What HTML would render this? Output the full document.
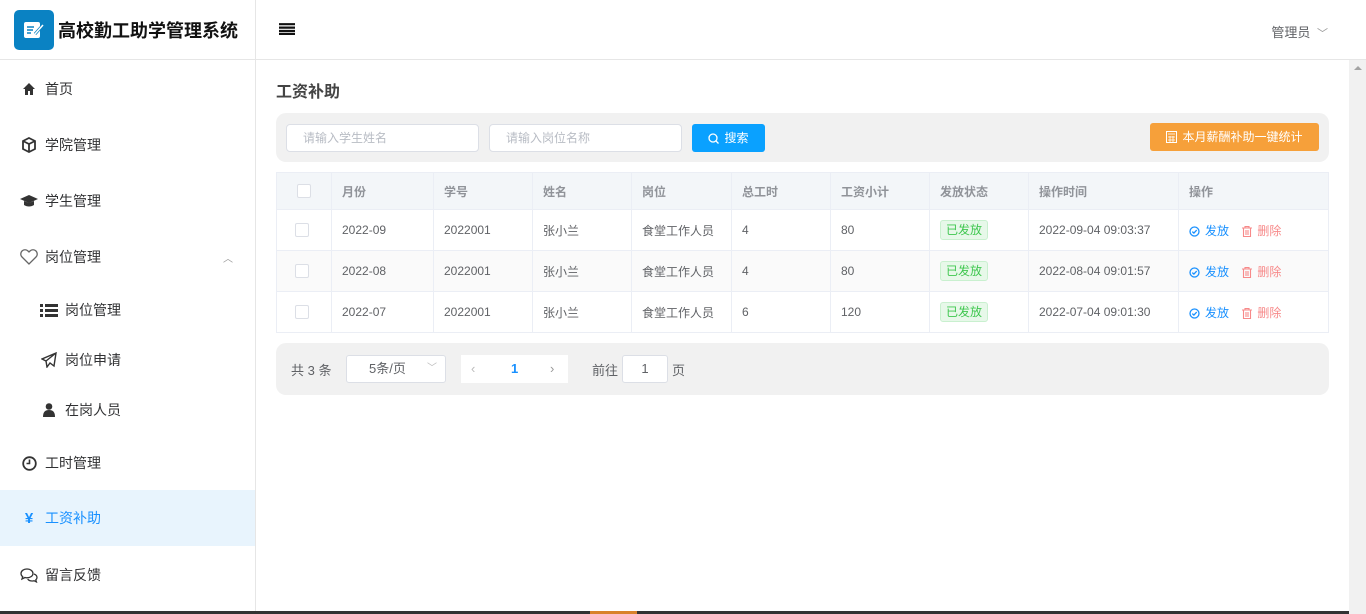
<!DOCTYPE html>
<html><head><meta charset="utf-8"><style>
*{margin:0;padding:0;box-sizing:border-box}
body{width:1366px;height:614px;overflow:hidden;font-family:"Liberation Sans","Noto Sans CJK SC",sans-serif;background:#fff;position:relative;color:#333}
.side{position:absolute;left:0;top:0;width:256px;height:614px;border-right:1px solid #e6e6e6}
.logo{height:60px;border-bottom:1px solid #e6e6e6;display:flex;align-items:center;padding-left:14px}
.logo .ic{width:40px;height:40px;background:#0a82c3;border-radius:5px;margin-right:4px;display:flex;align-items:center;justify-content:center}
.logo span{font-size:18px;font-weight:bold;color:#111}
.mi{position:absolute;left:0;width:255px;height:56px;display:flex;align-items:center;padding-left:20px;font-size:14px;color:#303133}
.mi i{width:18px;margin-right:7px;display:inline-flex;justify-content:center;font-style:normal}
.sub{padding-left:40px;height:50px}
.act{background:#e8f4fd;color:#1890ff}
.top{position:absolute;left:256px;top:0;right:0;height:60px;border-bottom:1px solid #e6e6e6}
.scroll{position:absolute;right:0;top:60px;width:17px;height:554px;background:#f1f1f1}
.title{position:absolute;left:276px;top:78px;font-size:16px;font-weight:bold;color:#444}
.bar{position:absolute;left:276px;top:113px;width:1053px;height:49px;background:#f1f1f1;border-radius:10px}
.inp{position:absolute;height:28px;background:#fff;border:1px solid #dcdfe6;border-radius:4px;font-size:12px;color:#b8bcc4;padding-left:16px;line-height:26px}
table{position:absolute;left:276px;top:172px;width:1053px;border-collapse:collapse;font-size:12px;color:#606266}
td,th{border:1px solid #ebeef5;text-align:left;padding-left:10px;height:41px}
th{background:#f3f6f9;height:37px;color:#909399;font-weight:bold}
.cb{display:inline-block;width:14px;height:14px;border:1px solid #dcdfe6;border-radius:2px;background:#fff;margin-left:8px;vertical-align:middle}
.tag{display:inline-block;background:#e7f8e9;border:1px solid #c9f0cf;color:#3fc74f;border-radius:3px;padding:0 5px;line-height:18px}
.blue{color:#1890ff}.red{color:#f78989}
svg.s{vertical-align:-2px;margin-right:5px}
.pg{position:absolute;left:276px;top:343px;width:1053px;height:52px;background:#f1f1f1;border-radius:10px;font-size:13px;color:#606266}
</style></head><body>
<div class="side">
<div class="logo"><div class="ic"><svg width="24" height="22" viewBox="0 0 24 22"><rect x="2" y="3" width="16" height="16" rx="2" fill="#fff"/><path d="M5 8h7M5 11h6M5 14h4" stroke="#0a82c3" stroke-width="1.6"/><path d="M13 15l8-9" stroke="#0a82c3" stroke-width="3"/><path d="M13 15l8-9" stroke="#fff" stroke-width="1.5"/></svg></div><span>高校勤工助学管理系统</span></div>
<div class="mi" style="top:61px"><i><svg width="14" height="14" viewBox="0 0 14 14"><path d="M7 1L1 7h2v6h3v-4h2v4h3V7h2z" fill="#333"/></svg></i>首页</div>
<div class="mi" style="top:117px"><i><svg width="16" height="16" viewBox="0 0 16 16"><path d="M8 1l6 3v8l-6 3-6-3V4z M2 4l6 3 6-3 M8 7v8" fill="none" stroke="#333" stroke-width="1.8"/></svg></i>学院管理</div>
<div class="mi" style="top:173px"><i><svg width="18" height="14" viewBox="0 0 18 14"><path d="M9 1L0 5l9 4 9-4z M4 7v4c3 2 7 2 10 0V7l-5 2z" fill="#333"/></svg></i>学生管理</div>
<div class="mi" style="top:229px"><i><svg width="18" height="16" viewBox="0 0 18 16"><path d="M9 15L2 8a4 4 0 016-6l1 1 1-1a4 4 0 016 6z" fill="none" stroke="#666" stroke-width="1.3"/></svg></i>岗位管理<span style="position:absolute;right:22px;color:#999;font-size:10px">︿</span></div>
<div class="mi sub" style="top:285px"><i><svg width="18" height="14" viewBox="0 0 18 14"><path d="M0 1h3v3H0zM5 1h13v3H5zM0 6h3v3H0zM5 6h13v3H5zM0 11h3v3H0zM5 11h13v3H5z" fill="#333"/></svg></i>岗位管理</div>
<div class="mi sub" style="top:335px"><i><svg width="16" height="16" viewBox="0 0 16 16"><path d="M15 1L1 7l4 2 1 6 3-4 4 3z M5 9l10-8" fill="none" stroke="#333" stroke-width="1.4"/></svg></i>岗位申请</div>
<div class="mi sub" style="top:385px"><i><svg width="12" height="14" viewBox="0 0 12 14"><circle cx="6" cy="3.5" r="3.3" fill="#333"/><path d="M0 14c0-5 2-7 6-7s6 2 6 7z" fill="#333"/></svg></i>在岗人员</div>
<div class="mi" style="top:435px"><i><svg width="15" height="15" viewBox="0 0 15 15"><circle cx="7.5" cy="7.5" r="6.3" fill="none" stroke="#333" stroke-width="1.8"/><path d="M7.5 3.5v4h-3" fill="none" stroke="#333" stroke-width="1.6"/></svg></i>工时管理</div>
<div class="mi act" style="top:490px"><i style="font-weight:bold;font-size:15px">¥</i>工资补助</div>
<div class="mi" style="top:547px"><i><svg width="18" height="15" viewBox="0 0 18 15"><path d="M7 1C3.5 1 1 3 1 5.5c0 1.3.6 2.4 1.7 3.2L2 11l3-1.5c.6.2 1.3.3 2 .3 3.5 0 6-2 6-4.3S10.5 1 7 1zM14 6c2 .7 3 2 3 3.5 0 1-.5 1.8-1.2 2.4l.6 2-2.4-1.2c-.6.2-1.2.3-1.9.3-2 0-3.6-.8-4.4-2" fill="none" stroke="#333" stroke-width="1.3"/></svg></i>留言反馈</div>
</div>
<div class="top"><svg style="position:absolute;left:23px;top:23px" width="16" height="12" viewBox="0 0 16 12"><path d="M0 1.2h16M0 4.6h16M0 8h16M0 11h16" stroke="#111" stroke-width="2.2"/></svg>
<span style="position:absolute;right:38px;top:22px;font-size:13px;color:#606266">管理员 <span style="color:#999;font-size:11px;margin-left:3px">﹀</span></span></div>
<div class="scroll"><div style="position:absolute;left:5px;top:6px;border:4px solid transparent;border-bottom:4px solid #a3a3a3;border-top:0"></div></div>
<div class="title">工资补助</div>
<div class="bar">
<div class="inp" style="left:10px;top:11px;width:193px">请输入学生姓名</div>
<div class="inp" style="left:213px;top:11px;width:193px">请输入岗位名称</div>
<div style="position:absolute;left:416px;top:11px;width:73px;height:28px;background:#0aa1ff;border-radius:3px;color:#fff;font-size:12px;line-height:28px;text-align:center"><svg class="s" width="11" height="11" viewBox="0 0 11 11"><circle cx="5" cy="5" r="4" fill="none" stroke="#fff" stroke-width="1.3"/><path d="M8 8l2.5 2.5" stroke="#fff" stroke-width="1.3"/></svg>搜索</div>
<div style="position:absolute;left:874px;top:10px;width:169px;height:28px;background:#f6a03a;border-radius:3px;color:#fff;font-size:12px;line-height:28px;text-align:center"><svg class="s" width="11" height="12" viewBox="0 0 11 12"><rect x=".5" y=".5" width="10" height="11" fill="none" stroke="#fff"/><path d="M2 3h7M2 6h7M2 9h7M4 5v6M7 5v6" stroke="#fff" stroke-width=".8"/></svg>本月薪酬补助一键统计</div>
</div>
<table>
<tr><th style="width:55px;padding-left:11px"><span class="cb" style="margin-left:9px"></span></th><th style="width:102px">月份</th><th style="width:99px">学号</th><th style="width:99px">姓名</th><th style="width:100px">岗位</th><th style="width:99px">总工时</th><th style="width:99px">工资小计</th><th style="width:99px">发放状态</th><th style="width:150px">操作时间</th><th>操作</th></tr>
<tr><td><span class="cb"></span></td><td>2022-09</td><td>2022001</td><td>张小兰</td><td>食堂工作人员</td><td>4</td><td>80</td><td><span class="tag">已发放</span></td><td>2022-09-04 09:03:37</td><td>OPS</td></tr>
<tr style="background:#fafafa"><td><span class="cb"></span></td><td>2022-08</td><td>2022001</td><td>张小兰</td><td>食堂工作人员</td><td>4</td><td>80</td><td><span class="tag">已发放</span></td><td>2022-08-04 09:01:57</td><td>OPS</td></tr>
<tr><td><span class="cb"></span></td><td>2022-07</td><td>2022001</td><td>张小兰</td><td>食堂工作人员</td><td>6</td><td>120</td><td><span class="tag">已发放</span></td><td>2022-07-04 09:01:30</td><td>OPS</td></tr>
</table>
<div class="pg">
<span style="position:absolute;left:15px;top:17px">共 3 条</span>
<div style="position:absolute;left:70px;top:12px;width:100px;height:28px;background:#fff;border:1px solid #dcdfe6;border-radius:3px;line-height:26px;padding-left:22px">5条/页<span style="position:absolute;right:8px;color:#bbb;font-size:10px">﹀</span></div>
<div style="position:absolute;left:185px;top:12px;width:107px;height:28px;background:#fff;line-height:28px"><span style="position:absolute;left:10px;color:#bbb">‹</span><span style="position:absolute;left:50px;color:#1890ff;font-weight:bold">1</span><span style="position:absolute;left:89px;color:#999">›</span></div>
<span style="position:absolute;left:316px;top:17px">前往</span>
<div style="position:absolute;left:346px;top:12px;width:46px;height:28px;background:#fff;border:1px solid #dcdfe6;border-radius:3px;line-height:26px;text-align:center">1</div>
<span style="position:absolute;left:396px;top:17px">页</span>
</div>
<div style="position:absolute;left:0;top:611px;width:1349px;height:3px;background:#333"></div>
<div style="position:absolute;left:590px;top:611px;width:47px;height:3px;background:#d9822b"></div>
<script>
var ops='<span class="blue"><svg class="s" width="11" height="11" viewBox="0 0 11 11"><circle cx="5.5" cy="5.5" r="4.5" fill="none" stroke="#1890ff" stroke-width="1.3"/><path d="M3.3 5.6l1.6 1.5 2.8-3" fill="none" stroke="#1890ff" stroke-width="1.3"/></svg>发放</span>&nbsp;&nbsp;&nbsp;&nbsp;<span class="red"><svg class="s" width="10" height="11" viewBox="0 0 10 11"><path d="M0 2h10M3 2V.6h4V2M1.5 2v8.5h7V2M4 4v5M6 4v5" fill="none" stroke="#f78989" stroke-width="1.1"/></svg>删除</span>';
document.querySelectorAll('td').forEach(function(t){if(t.textContent=='OPS')t.innerHTML=ops;});
</script>
</body></html>
